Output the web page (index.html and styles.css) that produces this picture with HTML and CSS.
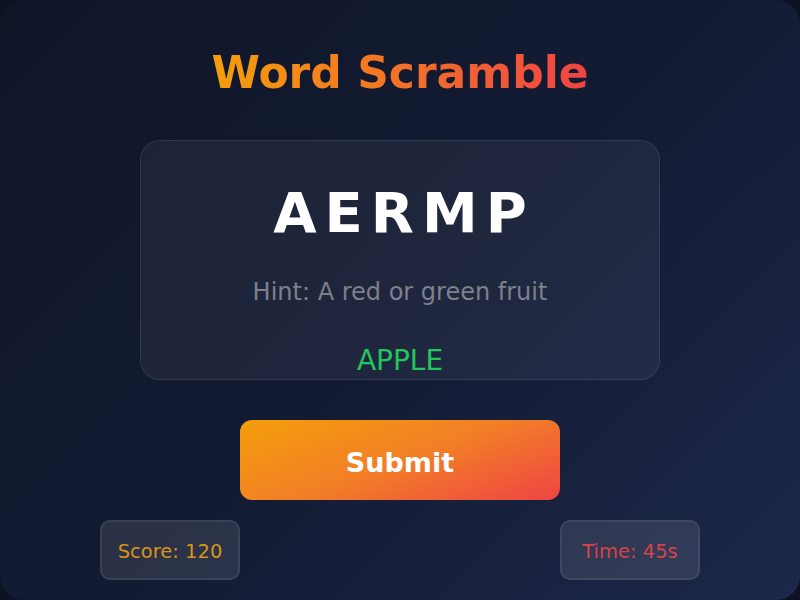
FILE: index.html
```html
<!DOCTYPE html>
<html lang="en">
<head>
<meta charset="utf-8">
<title>Word Scramble</title>
<link rel="stylesheet" href="styles.css">
</head>
<body>
<main class="app">
  <h1 class="title">Word Scramble</h1>
  <section class="card">
    <div class="scrambled">AERMP</div>
    <div class="hint">Hint: A red or green fruit</div>
    <div class="answer">APPLE</div>
  </section>
  <button class="submit" type="button">Submit</button>
  <div class="stats">
    <div class="stat stat-score">Score: 120</div>
    <div class="stat stat-time">Time: 45s</div>
  </div>
</main>
</body>
</html>
```

FILE: styles.css
```css
html, body {
  margin: 0;
  padding: 0;
  background: #0c1222;
}

body {
  width: 800px;
  height: 600px;
  overflow: hidden;
  font-family: "DejaVu Sans", "Liberation Sans", sans-serif;
}

.app {
  box-sizing: border-box;
  width: 800px;
  height: 600px;
  border-radius: 24px;
  background: linear-gradient(135deg, #0f1628 0%, #131b33 50%, #1c2849 100%);
  display: flex;
  flex-direction: column;
  align-items: center;
  padding-top: 47px;
}

.title {
  margin: 0;
  font-size: 44px;
  line-height: 51px;
  font-weight: bold;
  background: linear-gradient(90deg, #f59e0b, #ef4444);
  -webkit-background-clip: text;
  background-clip: text;
  color: transparent;
}

.card {
  box-sizing: border-box;
  margin-top: 42px;
  width: 520px;
  height: 240px;
  border-radius: 20px;
  background: rgba(255, 255, 255, 0.05);
  border: 1px solid rgba(255, 255, 255, 0.09);
  padding-top: 39px;
  display: flex;
  flex-direction: column;
  align-items: center;
  text-align: center;
}

.scrambled {
  font-size: 56px;
  line-height: 65px;
  font-weight: bold;
  color: #ffffff;
  letter-spacing: 8px;
  padding-left: 8px;
}

.hint {
  margin-top: 33px;
  font-size: 24px;
  line-height: 28px;
  color: #7d818c;
}

.answer {
  margin-top: 38px;
  font-size: 28px;
  line-height: 33px;
  color: #22c55e;
}

.submit {
  box-sizing: border-box;
  margin-top: 40px;
  width: 320px;
  height: 80px;
  border: none;
  border-radius: 12px;
  background: linear-gradient(160deg, #f59e0b 0%, #f27f26 50%, #ef4444 100%);
  color: #ffffff;
  font-family: "DejaVu Sans", "Liberation Sans", sans-serif;
  font-size: 27px;
  font-weight: bold;
  padding: 4px 0 0 0;
}

.stats {
  margin-top: 20px;
  width: 600px;
  display: flex;
  justify-content: space-between;
}

.stat {
  box-sizing: border-box;
  width: 140px;
  height: 60px;
  border-radius: 10px;
  background: rgba(255, 255, 255, 0.1);
  border: 2px solid rgba(255, 255, 255, 0.08);
  display: flex;
  align-items: center;
  justify-content: center;
  padding-top: 3px;
  font-size: 19.5px;
}

.stat-score {
  color: #d99416;
}

.stat-time {
  color: #d9414a;
}
```
